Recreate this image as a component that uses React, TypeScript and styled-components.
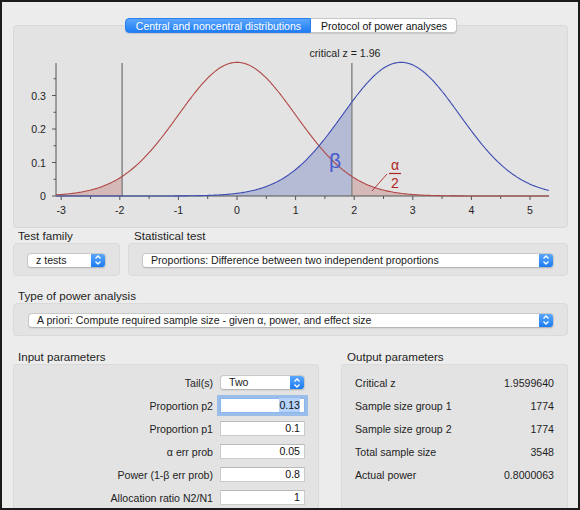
import React, { useMemo } from 'react';
import styled, { createGlobalStyle } from 'styled-components';

const GlobalStyle = createGlobalStyle`
  html, body {
    margin: 0;
    padding: 0;
    background: #ececec;
  }
  body {
    font-family: "Liberation Sans", Arial, Helvetica, sans-serif;
    color: #1e1e1e;
  }
`;

// chart geometry (svg coordinates inside the chart box)
const X0 = 223;
const XS = 58.6;
const Y0 = 170;
const YS = 335;
const AX_LEFT = 42;
const AX_RIGHT = 535;
const CRIT = 1.96;
const DELTA = 2.8;

const px = (z: number) => X0 + XS * z;
const py = (d: number) => Y0 - YS * d;
const pdf = (z: number) => Math.exp(-(z * z) / 2) / Math.sqrt(2 * Math.PI);

const zMin = (AX_LEFT - X0) / XS;
const zMax = (AX_RIGHT - X0) / XS;

const curve = (from: number, to: number, shift: number) => {
  const pts: string[] = [];
  const step = 0.02;
  for (let z = from; z < to; z += step) {
    pts.push(`${px(z).toFixed(2)},${py(pdf(z - shift)).toFixed(2)}`);
  }
  pts.push(`${px(to).toFixed(2)},${py(pdf(to - shift)).toFixed(2)}`);
  return pts;
};

const area = (from: number, to: number, shift: number) =>
  `M${px(from).toFixed(2)},${Y0} L${curve(from, to, shift).join(' L')} L${px(to).toFixed(2)},${Y0} Z`;

const Chart = () => {
  const paths = useMemo(
    () => ({
      red: 'M' + curve(zMin, zMax, 0).join(' L'),
      blue: 'M' + curve(zMin, zMax, DELTA).join(' L'),
      beta: area(zMin, CRIT, DELTA),
      alphaLeft: area(zMin, -CRIT, 0),
      alphaRight: area(CRIT, zMax, 0),
    }),
    []
  );

  const xTicks: number[] = [];
  for (let v = -3; v <= 5; v += 0.5) xTicks.push(v);
  const yTicks = [0, 0.05, 0.1, 0.15, 0.2, 0.25, 0.3, 0.35];

  return (
    <ChartSvg width={554} height={201} viewBox="0 0 554 201">
      <path d={paths.alphaLeft} fill="rgba(178, 74, 72, 0.27)" />
      <path d={paths.beta} fill="rgba(59, 76, 176, 0.27)" />
      <path d={paths.alphaRight} fill="rgba(178, 74, 72, 0.27)" />

      <line x1={px(-CRIT)} y1={37} x2={px(-CRIT)} y2={Y0} stroke="#8c8c8c" strokeWidth={1.6} />
      <line x1={px(CRIT)} y1={37} x2={px(CRIT)} y2={Y0} stroke="#8c8c8c" strokeWidth={1.6} />

      <line x1={AX_LEFT} y1={37} x2={AX_LEFT} y2={Y0} stroke="#555" strokeWidth={1} />
      <line x1={AX_LEFT} y1={Y0} x2={AX_RIGHT} y2={Y0} stroke="#555" strokeWidth={1} />
      {yTicks.map((v) => {
        const major = Math.round(v * 100) % 10 === 0;
        return (
          <g key={v}>
            <line
              x1={AX_LEFT - (major ? 4 : 2.5)}
              y1={py(v)}
              x2={AX_LEFT}
              y2={py(v)}
              stroke="#555"
            />
            {major && (
              <AxisText x={32} y={py(v) + 4} textAnchor="end">
                {v === 0 ? '0' : v.toFixed(1)}
              </AxisText>
            )}
          </g>
        );
      })}
      {xTicks.map((v) => {
        const major = Number.isInteger(v);
        return (
          <g key={v}>
            <line x1={px(v)} y1={Y0} x2={px(v)} y2={Y0 + (major ? 4 : 3)} stroke="#555" />
            {major && (
              <AxisText x={px(v)} y={188} textAnchor="middle">
                {v}
              </AxisText>
            )}
          </g>
        );
      })}

      <path d={paths.red} fill="none" stroke="#b04846" strokeWidth={1.1} />
      <path d={paths.blue} fill="none" stroke="#3d4db2" strokeWidth={1.1} />

      <AxisText x={331} y={31} textAnchor="middle">
        critical z = 1.96
      </AxisText>

      <text x={321} y={142} fontSize={21} fill="#4a5ccc" textAnchor="middle" fontFamily="Liberation Sans, sans-serif">
        β
      </text>
      <text x={381} y={144} fontSize={14} fill="#b02424" textAnchor="middle" fontFamily="Liberation Sans, sans-serif">
        α
      </text>
      <line x1={375} y1={147.5} x2={387} y2={147.5} stroke="#b02424" strokeWidth={1.2} />
      <text x={381} y={162} fontSize={14} fill="#b02424" textAnchor="middle" fontFamily="Liberation Sans, sans-serif">
        2
      </text>
      <line x1={358} y1={165} x2={373} y2={148} stroke="#b02424" strokeWidth={0.9} />
    </ChartSvg>
  );
};

const Stepper = () => (
  <StepperBox>
    <svg width="8" height="12" viewBox="0 0 8 12">
      <path d="M1.5 4.5 L4 2 L6.5 4.5" fill="none" stroke="#fff" strokeWidth="1.3" />
      <path d="M1.5 7.5 L4 10 L6.5 7.5" fill="none" stroke="#fff" strokeWidth="1.3" />
    </svg>
  </StepperBox>
);

const Select = ({ value, width }: { value: string; width?: number }) => (
  <PopUp $width={width}>
    <PopUpText>{value}</PopUpText>
    <Stepper />
  </PopUp>
);

const inputs = [
  { label: 'Proportion p2', value: '0.13', focused: true },
  { label: 'Proportion p1', value: '0.1' },
  { label: 'α err prob', value: '0.05' },
  { label: 'Power (1-β err prob)', value: '0.8' },
  { label: 'Allocation ratio N2/N1', value: '1' },
];

const outputs = [
  { label: 'Critical z', value: '1.9599640' },
  { label: 'Sample size group 1', value: '1774' },
  { label: 'Sample size group 2', value: '1774' },
  { label: 'Total sample size', value: '3548' },
  { label: 'Actual power', value: '0.8000063' },
];

const App = () => {
  return (
    <>
      <GlobalStyle />
      <Window>
        <TabBar>
          <Tab $active>Central and noncentral distributions</Tab>
          <Tab>Protocol of power analyses</Tab>
        </TabBar>
        <ChartBox>
          <Chart />
        </ChartBox>

        <TestRow>
          <Field>
            <Caption>Test family</Caption>
            <GroupBox>
              <Select value="z tests" width={80} />
            </GroupBox>
          </Field>
          <Field>
            <Caption $indent={6}>Statistical test</Caption>
            <GroupBox>
              <Select value="Proportions: Difference between two independent proportions" />
            </GroupBox>
          </Field>
        </TestRow>

        <Field $gap>
          <Caption>Type of power analysis</Caption>
          <GroupBox $left={14}>
            <Select value="A priori: Compute required sample size - given α, power, and effect size" />
          </GroupBox>
        </Field>

        <ParamsRow>
          <Panel>
            <Caption>Input parameters</Caption>
            <PanelBox>
              <InputGrid>
                <ParamLabel>Tail(s)</ParamLabel>
                <Select value="Two" />
                {inputs.map((item) => (
                  <React.Fragment key={item.label}>
                    <ParamLabel>{item.label}</ParamLabel>
                    <NumberField $focused={item.focused}>
                      {item.focused ? <Selected>{item.value}</Selected> : item.value}
                    </NumberField>
                  </React.Fragment>
                ))}
              </InputGrid>
            </PanelBox>
          </Panel>
          <Panel>
            <Caption $indent={6}>Output parameters</Caption>
            <PanelBox>
              <OutputList>
                {outputs.map((item) => (
                  <OutputRow key={item.label}>
                    <span>{item.label}</span>
                    <span>{item.value}</span>
                  </OutputRow>
                ))}
              </OutputList>
            </PanelBox>
          </Panel>
        </ParamsRow>
      </Window>
    </>
  );
};

export default App;

const Window = styled.div`
  width: 580px;
  height: 510px;
  box-sizing: border-box;
  border: 2px solid #1b1b1b;
  background: #ececec;
  padding: 16px 10px 0 11px;
  overflow: hidden;
  display: flex;
  flex-direction: column;
`;

const TabBar = styled.div`
  display: flex;
  justify-content: center;
  position: relative;
  z-index: 1;
  height: 15px;
  padding-left: 1px;
`;

const Tab = styled.div<{ $active?: boolean }>`
  height: 15px;
  box-sizing: border-box;
  padding: 0 9px 0 10px;
  font-size: 10.5px;
  line-height: 14px;
  white-space: nowrap;
  color: ${(p) => (p.$active ? '#fff' : '#111')};
  background: ${(p) => (p.$active ? 'linear-gradient(#5aa5fb, #1f7df3)' : '#fff')};
  border: 1px solid ${(p) => (p.$active ? '#2a80ee' : '#c6c6c6')};
  border-radius: ${(p) => (p.$active ? '4px 0 0 4px' : '0 4px 4px 0')};
  ${(p) => (p.$active ? '' : 'border-left: none;')}
  box-shadow: 0 1px 1px rgba(0, 0, 0, 0.12);
`;

const ChartBox = styled.div`
  margin-top: -8px;
  height: 203px;
  box-sizing: border-box;
  border: 1px solid #d8d8d8;
  border-radius: 4px;
  background: #e3e3e3;
`;

const ChartSvg = styled.svg`
  display: block;
`;

const AxisText = styled.text`
  font-family: "Liberation Sans", Arial, sans-serif;
  font-size: 10.6px;
  fill: #1e1e1e;
`;

const TestRow = styled.div`
  display: grid;
  grid-template-columns: 107px 1fr;
  column-gap: 8px;
  margin-top: 1px;
`;

const Field = styled.div<{ $gap?: boolean }>`
  display: flex;
  flex-direction: column;
  margin-top: ${(p) => (p.$gap ? '13px' : '0')};
`;

const Caption = styled.div<{ $indent?: number }>`
  font-size: 11.6px;
  line-height: 14px;
  height: 14px;
  padding-left: ${(p) => p.$indent ?? 5}px;
  color: #1e1e1e;
`;

const GroupBox = styled.div<{ $left?: number }>`
  height: 33px;
  box-sizing: border-box;
  border: 1px solid #dadada;
  border-radius: 4px;
  background: #e3e3e3;
  display: flex;
  align-items: center;
  padding: 1px 13px 0 ${(p) => p.$left ?? 13}px;
`;

const PopUp = styled.div<{ $width?: number }>`
  ${(p) => (p.$width ? `width: ${p.$width}px;` : 'flex: 1;')}
  height: 15px;
  box-sizing: border-box;
  display: flex;
  align-items: stretch;
  background: #fff;
  border: 1px solid #c8c8c8;
  border-bottom-color: #b6b6b6;
  border-radius: 4px;
  box-shadow: 0 1px 1px rgba(0, 0, 0, 0.06);
  font-size: 10.6px;
  overflow: hidden;
`;

const PopUpText = styled.span`
  flex: 1;
  padding-left: 8px;
  line-height: 13px;
  white-space: nowrap;
  overflow: hidden;
  color: #1a1a1a;
`;

const StepperBox = styled.span`
  width: 14px;
  display: flex;
  align-items: center;
  justify-content: center;
  background: linear-gradient(#5aa7fb, #1b7bf2);
`;

const ParamsRow = styled.div`
  flex: 1;
  display: grid;
  grid-template-columns: 306px 1fr;
  column-gap: 22px;
  margin-top: 14px;
`;

const Panel = styled.div`
  display: flex;
  flex-direction: column;
`;

const PanelBox = styled.div`
  flex: 1;
  border: 1px solid #dadada;
  border-bottom: none;
  border-radius: 4px 4px 0 0;
  background: #e3e3e3;
`;

const InputGrid = styled.div`
  display: grid;
  grid-template-columns: 1fr 85px;
  grid-auto-rows: 23px;
  column-gap: 7px;
  align-items: center;
  padding: 6px 13px 0 0;
`;

const ParamLabel = styled.div`
  text-align: right;
  font-size: 10.6px;
  color: #1e1e1e;
  white-space: nowrap;
`;

const NumberField = styled.div<{ $focused?: boolean }>`
  height: 15px;
  box-sizing: border-box;
  background: #fff;
  border: 1px solid ${(p) => (p.$focused ? '#8cb6ee' : '#cbcbcb')};
  border-top-color: ${(p) => (p.$focused ? '#8cb6ee' : '#b9b9b9')};
  box-shadow: ${(p) => (p.$focused ? '0 0 0 3px rgba(96, 158, 240, 0.55)' : 'none')};
  font-size: 10.6px;
  line-height: 13px;
  text-align: right;
  padding-right: 4px;
  color: #111;
`;

const Selected = styled.span`
  background: #b5d3fb;
  padding: 1px 0;
`;

const OutputList = styled.div`
  display: flex;
  flex-direction: column;
  padding: 6px 13px 0 13px;
`;

const OutputRow = styled.div`
  height: 23px;
  display: flex;
  align-items: center;
  justify-content: space-between;
  font-size: 10.6px;
  color: #1e1e1e;
`;
